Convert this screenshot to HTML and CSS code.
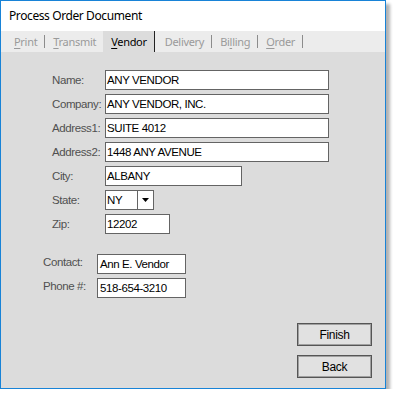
FILE: index.html
```html
<!DOCTYPE html>
<html>
<head>
<meta charset="utf-8">
<link rel="stylesheet" href="styles.css">
</head>
<body>
<div class="win">
  <div class="titlebar">Process Order Document</div>
  <div class="tabs">
    <span class="tab"><u>P</u>rint</span><i class="sep"></i>
    <span class="tab"><u>T</u>ransmit</span>
    <span class="tab active"><u>V</u>endor</span>
    <span class="tab">Delivery</span><i class="sep"></i>
    <span class="tab">Bi<u>l</u>ling</span><i class="sep"></i>
    <span class="tab"><u>O</u>rder</span><i class="sep"></i>
  </div>
  <div class="body">
    <div class="form">
      <label class="lbl">Name:</label><div class="box w-long">ANY VENDOR</div>
      <label class="lbl">Company:</label><div class="box w-long">ANY VENDOR, INC.</div>
      <label class="lbl">Address1:</label><div class="box w-long">SUITE 4012</div>
      <label class="lbl">Address2:</label><div class="box w-long">1448 ANY AVENUE</div>
      <label class="lbl">City:</label><div class="box w-city">ALBANY</div>
      <label class="lbl">State:</label>
      <div class="box select"><span class="sel-val">NY</span><span class="sel-btn"><svg width="8" height="5" viewBox="0 0 8 5"><path d="M0 0H7L3.5 4Z" fill="#000"/></svg></span></div>
      <label class="lbl">Zip:</label><div class="box w-zip">12202</div>
    </div>
    <div class="form contact">
      <label class="lbl">Contact:</label><div class="box w-contact">Ann E. Vendor</div>
      <label class="lbl">Phone #:</label><div class="box w-contact">518-654-3210</div>
    </div>
    <div class="buttons">
      <button class="btn">Finish</button>
      <button class="btn">Back</button>
    </div>
  </div>
</div>
</body>
</html>
```
FILE: styles.css
```css
html, body {
  margin: 0;
  padding: 0;
  background: #ffffff;
}
.win {
  width: 386px;
  height: 389px;
  box-sizing: border-box;
  border: 1px solid #1883d7;
  box-shadow: 4px 4px 3px rgba(0, 0, 0, 0.3);
  background: #dcdcdc;
  display: flex;
  flex-direction: column;
}
.titlebar {
  height: 30px;
  background: #ffffff;
  padding-left: 8px;
  padding-bottom: 1px;
  box-sizing: border-box;
  display: flex;
  align-items: center;
  font-family: "Noto Sans", sans-serif;
  font-size: 12px;
  letter-spacing: -0.4px;
  color: #000;
}
.tabs {
  height: 21px;
  background: #ececec;
  display: flex;
  align-items: center;
  padding-left: 5px;
  font-family: "Noto Sans", sans-serif;
  font-size: 11px;
  letter-spacing: -0.3px;
  color: #9a9a9a;
}
.tab {
  padding: 0 7px 0 8px;
  height: 21px;
  line-height: 21px;
}
.tab u {
  text-decoration-thickness: 1px;
  text-underline-offset: 2px;
}
.tab.active {
  background: #dcdcdc;
  color: #000;
  border-right: 1px solid #222;
  margin-right: 2px;
}
.sep {
  width: 1px;
  height: 13px;
  background: #8c8c8c;
}
.body {
  flex: 1;
  display: flex;
  flex-direction: column;
  padding: 18px 13px 10px 0;
  font-family: "Liberation Sans", Arial, sans-serif;
  font-size: 11.5px;
  letter-spacing: -0.4px;
}
.form {
  display: grid;
  grid-template-columns: 53px auto;
  row-gap: 4px;
  padding-left: 51px;
  align-items: center;
  justify-items: start;
}
.lbl {
  color: #505050;
  line-height: 16px;
  margin-top: -1px;
}
.box {
  height: 20px;
  box-sizing: border-box;
  border: 1px solid #646464;
  background: #fff;
  color: #000;
  padding-left: 1px;
  line-height: 18px;
  white-space: nowrap;
}
.w-long { width: 224px; }
.w-city { width: 137px; }
.w-zip { width: 65px; }
.select {
  width: 49px;
  display: flex;
  padding-left: 1px;
}
.sel-val {
  width: 30px;
}
.sel-btn {
  flex: 1;
  border-left: 1px solid #646464;
  display: flex;
  align-items: center;
  justify-content: center;
}
.contact {
  margin-top: 20px;
  padding-left: 42px;
  grid-template-columns: 54px auto;
  align-items: start;
}
.contact .lbl {
  margin-top: 0;
}
.w-contact {
  width: 89px;
  padding-left: 2px;
}
.buttons {
  margin-top: auto;
  display: flex;
  flex-direction: column;
  align-items: flex-end;
  gap: 9px;
}
.btn {
  width: 75px;
  height: 23px;
  box-sizing: border-box;
  border: 1px solid #555;
  box-shadow: inset 0 0 0 1px #a0a0a0;
  background: #e1e1e1;
  font-family: "Liberation Sans", Arial, sans-serif;
  font-size: 12px;
  letter-spacing: -0.3px;
  color: #000;
  padding: 0;
  margin: 0;
}
```
